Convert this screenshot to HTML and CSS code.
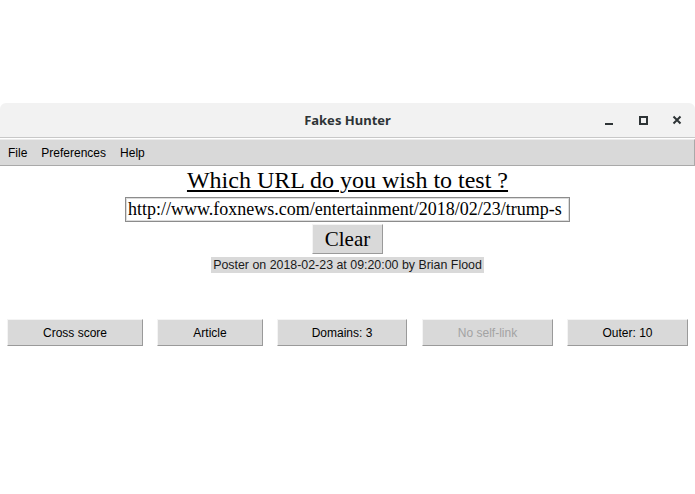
FILE: index.html
```html
<!DOCTYPE html>
<html lang="en">
<head>
<meta charset="UTF-8">
<title>Fakes Hunter</title>
<link rel="stylesheet" href="styles.css">
</head>
<body>
<div class="window">
  <div class="titlebar">
    <span class="title">Fakes Hunter</span>
    <div class="controls">
      <span class="ctl ctl-min"></span>
      <span class="ctl ctl-max"></span>
      <span class="ctl ctl-close">
        <svg width="10" height="10" viewBox="0 0 10 10"><path d="M1.5 1.5 L8.5 8.5 M8.5 1.5 L1.5 8.5" stroke="#2e3436" stroke-width="2"/></svg>
      </span>
    </div>
  </div>
  <div class="menubar">
    <span class="menu">File</span>
    <span class="menu">Preferences</span>
    <span class="menu">Help</span>
  </div>
  <div class="main">
    <div class="question">Which URL do you wish to test ?</div>
    <div class="entry"><span class="url">http://www.foxnews.com/entertainment/2018/02/23/trump-s</span></div>
    <button class="clear">Clear</button>
    <div class="poster">Poster on 2018-02-23 at 09:20:00 by Brian Flood</div>
  </div>
  <div class="results">
    <button class="res w-cross">Cross score</button>
    <button class="res w-article">Article</button>
    <button class="res w-domains">Domains: 3</button>
    <button class="res w-self" disabled>No self-link</button>
    <button class="res w-outer">Outer: 10</button>
  </div>
</div>
</body>
</html>
```

FILE: styles.css
```css
body {
  margin: 0;
  background: #ffffff;
  font-family: 'Liberation Sans', Arial, sans-serif;
  color: #000;
}
.window {
  margin-top: 103px;
  width: 695px;
}
.titlebar {
  height: 34px;
  background: #f2f2f2;
  border-radius: 6px 6px 0 0;
  border-bottom: 1px solid #c8c8c8;
  position: relative;
  display: flex;
  justify-content: center;
  align-items: center;
}
.title {
  font-family: 'Noto Sans', 'DejaVu Sans', sans-serif;
  font-weight: bold;
  font-size: 13px;
  color: #2e3436;
}
.controls {
  position: absolute;
  right: 0;
  top: 0;
  height: 34px;
  display: flex;
  align-items: center;
}
.ctl {
  width: 34px;
  height: 34px;
  display: flex;
  justify-content: center;
  align-items: center;
}
.ctl-min::after {
  content: '';
  width: 8px;
  height: 2px;
  background: #2e3436;
  margin-top: 8px;
}
.ctl-max::after {
  content: '';
  width: 5px;
  height: 5px;
  border: 2px solid #2e3436;
}
.ctl-close {
  width: 33px;
  margin-right: 2px;
}
.menubar {
  height: 27px;
  background: #d9d9d9;
  border-top: 1px solid #ececec;
  border-bottom: 1px solid #a9a9a9;
  border-right: 1px solid #a9a9a9;
  display: flex;
  align-items: center;
  padding-left: 8px;
  gap: 14px;
  font-size: 12px;
  box-sizing: border-box;
  margin-top: 1px;
}
.main {
  display: flex;
  flex-direction: column;
  align-items: center;
}
.question {
  font-family: 'Liberation Serif', 'Times New Roman', serif;
  font-size: 24px;
  line-height: 28px;
  text-decoration: underline;
  text-decoration-thickness: 2px;
  text-underline-offset: 2px;
}
.entry {
  margin-top: 3px;
  width: 445px;
  height: 25px;
  box-sizing: border-box;
  border: 1px solid #8c8c8c;
  box-shadow: inset 0 0 0 1px #dcdcdc;
  padding: 0 2px;
  font-family: 'Liberation Serif', 'Times New Roman', serif;
  font-size: 18px;
  line-height: 22px;
  white-space: nowrap;
  overflow: hidden;
  background: #fff;
}
.clear {
  margin-top: 2px;
  width: 71px;
  height: 30px;
  background: #d9d9d9;
  border: 1px solid;
  border-color: #f4f4f4 #9a9a9a #9a9a9a #f4f4f4;
  font-family: 'Liberation Serif', 'Times New Roman', serif;
  font-size: 21px;
  padding: 0;
  color: #000;
}
.poster {
  margin-top: 3px;
  background: #d9d9d9;
  font-size: 12.4px;
  line-height: 16px;
  padding: 0 2px;
  color: #1a1a1a;
}
.results {
  display: flex;
  gap: 14px;
  padding-left: 7px;
  margin-top: 46px;
}
.res {
  height: 27px;
  background: #d9d9d9;
  border: 1px solid;
  border-color: #f4f4f4 #9a9a9a #9a9a9a #f4f4f4;
  font-family: 'Liberation Sans', Arial, sans-serif;
  font-size: 12px;
  color: #000;
  padding: 0;
}
.res:disabled {
  color: #a3a3a3;
}
.w-cross { width: 136px; }
.w-article { width: 106px; }
.w-domains { width: 130px; margin-right: 1px; }
.w-self { width: 131px; }
.w-outer { width: 121px; }
```
